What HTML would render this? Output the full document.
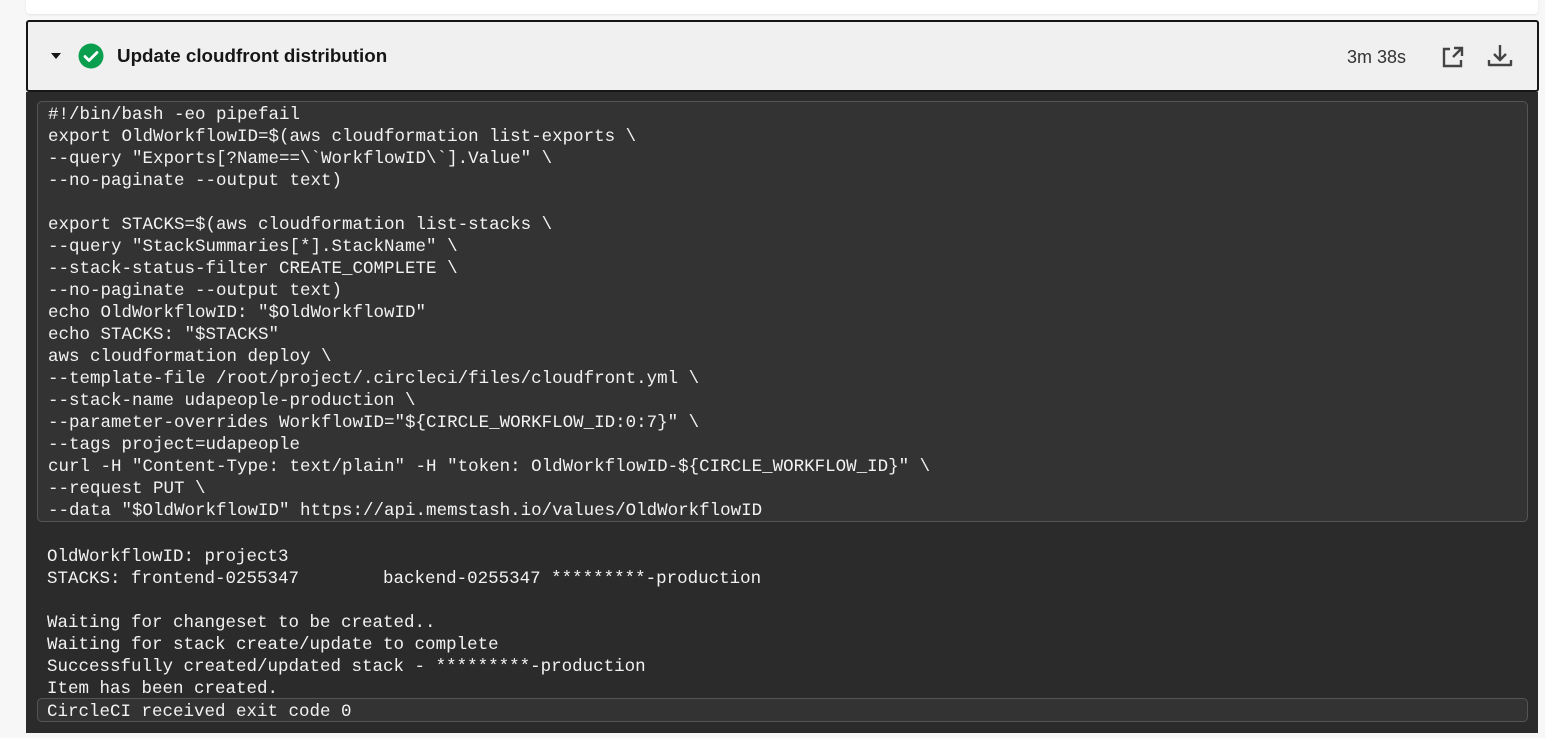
<!DOCTYPE html>
<html><head><meta charset="utf-8"><style>
*{margin:0;padding:0;box-sizing:border-box}
html,body{width:1545px;height:738px;overflow:hidden;background:#f7f7f7;font-family:"Liberation Sans",sans-serif}
.topcard{position:absolute;left:26px;top:0;width:1512px;height:14px;background:#fff;border-radius:0 0 4px 4px;box-shadow:0 1px 2px rgba(0,0,0,.08)}
.hdr{position:absolute;left:26px;top:20px;width:1513px;height:72px;background:#f0f0f0;border:2px solid #161616;border-radius:3px}
.title{position:absolute;left:89px;top:23px;font-size:18.8px;font-weight:bold;color:#161616}
.dur{position:absolute;left:1319px;top:25px;font-size:18px;color:#333}
.dark{position:absolute;left:26px;top:92px;width:1512px;height:641px;background:#2b2b2b}
.box{position:absolute;background:#333;border:1px solid #555;border-radius:5px}
.l{position:absolute;font-family:"Liberation Mono",monospace;font-size:17.5px;color:#f2f2f2;white-space:pre;line-height:22px}
</style></head><body>
<div class="topcard"></div>
<div class="hdr">
<svg style="position:absolute;left:22px;top:30px" width="12" height="8" viewBox="0 0 12 8"><path d="M1 1h10L6 7z" fill="#161616"/></svg>
<svg style="position:absolute;left:50px;top:21px" width="26" height="26" viewBox="0 0 26 26"><circle cx="13" cy="13" r="12.5" fill="#0a9f4e"/><path d="M7 13.5l4 4 8-8" fill="none" stroke="#fff" stroke-width="2.8" stroke-linecap="round" stroke-linejoin="round"/></svg>
<div class="title">Update cloudfront distribution</div>
<div class="dur">3m 38s</div>
<svg style="position:absolute;left:1413px;top:23px" width="24" height="24" viewBox="0 0 24 24"><path d="M9 4H3v17h17v-6" fill="none" stroke="#444" stroke-width="2.4"/><path d="M13 3h8v8M21 3l-9 9" fill="none" stroke="#444" stroke-width="2.4"/></svg>
<svg style="position:absolute;left:1459px;top:21px" width="26" height="26" viewBox="0 0 26 26"><path d="M13 2v15M7 11l6 6 6-6" fill="none" stroke="#444" stroke-width="2.4"/><path d="M2 17v5h22v-5" fill="none" stroke="#444" stroke-width="2.4" stroke-linejoin="round"/></svg>
</div>
<div class="dark"></div>
<div class="box" style="left:37px;top:101px;width:1491px;height:421px"></div>
<div class="box" style="left:37px;top:698px;width:1491px;height:24px"></div>
<div class="l" style="left:48px;top:104px">#!/bin/bash -eo pipefail</div>
<div class="l" style="left:48px;top:126px">export OldWorkflowID=$(aws cloudformation list-exports \</div>
<div class="l" style="left:48px;top:148px">--query "Exports[?Name==\`WorkflowID\`].Value" \</div>
<div class="l" style="left:48px;top:170px">--no-paginate --output text)</div>
<div class="l" style="left:48px;top:214px">export STACKS=$(aws cloudformation list-stacks \</div>
<div class="l" style="left:48px;top:236px">--query "StackSummaries[*].StackName" \</div>
<div class="l" style="left:48px;top:258px">--stack-status-filter CREATE_COMPLETE \</div>
<div class="l" style="left:48px;top:280px">--no-paginate --output text)</div>
<div class="l" style="left:48px;top:302px">echo OldWorkflowID: "$OldWorkflowID"</div>
<div class="l" style="left:48px;top:324px">echo STACKS: "$STACKS"</div>
<div class="l" style="left:48px;top:346px">aws cloudformation deploy \</div>
<div class="l" style="left:48px;top:368px">--template-file /root/project/.circleci/files/cloudfront.yml \</div>
<div class="l" style="left:48px;top:390px">--stack-name udapeople-production \</div>
<div class="l" style="left:48px;top:412px">--parameter-overrides WorkflowID="${CIRCLE_WORKFLOW_ID:0:7}" \</div>
<div class="l" style="left:48px;top:434px">--tags project=udapeople</div>
<div class="l" style="left:48px;top:456px">curl -H "Content-Type: text/plain" -H "token: OldWorkflowID-${CIRCLE_WORKFLOW_ID}" \</div>
<div class="l" style="left:48px;top:478px">--request PUT \</div>
<div class="l" style="left:48px;top:500px">--data "$OldWorkflowID" https://api.memstash.io/values/OldWorkflowID</div>
<div class="l" style="left:47px;top:546px">OldWorkflowID: project3</div>
<div class="l" style="left:47px;top:568px">STACKS: frontend-0255347        backend-0255347 *********-production</div>
<div class="l" style="left:47px;top:612px">Waiting for changeset to be created..</div>
<div class="l" style="left:47px;top:634px">Waiting for stack create/update to complete</div>
<div class="l" style="left:47px;top:656px">Successfully created/updated stack - *********-production</div>
<div class="l" style="left:47px;top:678px">Item has been created.</div>
<div class="l" style="left:47px;top:701px">CircleCI received exit code 0</div>
</body></html>
